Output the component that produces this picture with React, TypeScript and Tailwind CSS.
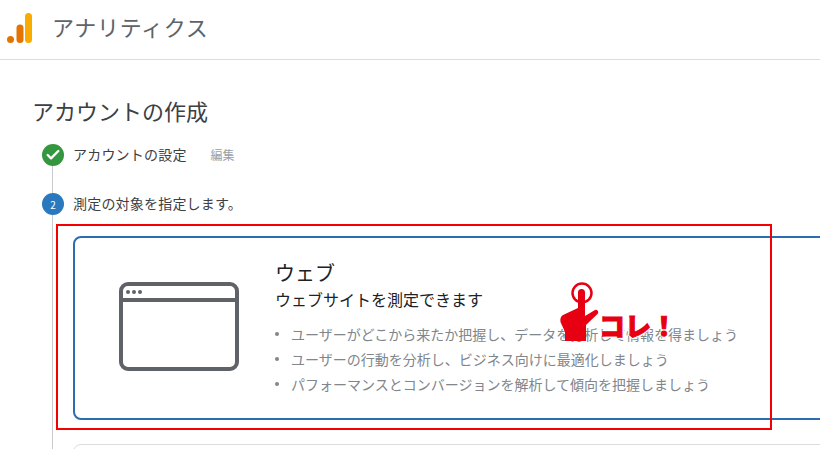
import React from 'react';
import { Check } from 'lucide-react';

const bullets = [
  'ユーザーがどこから来たか把握し、データを分析して情報を得ましょう',
  'ユーザーの行動を分析し、ビジネス向けに最適化しましょう',
  'パフォーマンスとコンバージョンを解析して傾向を把握しましょう',
];

const font = "font-['Noto_Sans_CJK_JP','Noto_Sans',sans-serif]";

const AnalyticsLogo = () => (
  <svg width="28" height="32" viewBox="0 0 28 32" className="block -mt-[2px]">
    <rect x="19" y="0" width="7" height="30" rx="3.5" fill="#f9ab00" />
    <rect x="10.5" y="11.5" width="7" height="18.5" rx="3.5" fill="#e37400" />
    <circle cx="4.5" cy="26.5" r="3.5" fill="#e37400" />
  </svg>
);

const BrowserIcon = () => (
  <svg width="120" height="89" viewBox="0 0 120 89" className="block shrink-0">
    <rect x="2" y="2" width="116" height="85" rx="7" fill="none" stroke="#5f6368" strokeWidth="4" />
    <rect x="1" y="16" width="118" height="4" fill="#5f6368" />
    <circle cx="9" cy="10" r="2" fill="#5f6368" />
    <circle cx="15" cy="10" r="2" fill="#5f6368" />
    <circle cx="21" cy="10" r="2" fill="#5f6368" />
  </svg>
);

const TapHand = () => (
  <svg width="42" height="66" viewBox="0 0 42 66" className="block">
    <circle cx="22" cy="13" r="9.5" fill="none" stroke="#e60012" strokeWidth="2.5" />
    <path
      d="M18 12.5a3.500 3.500 0 0 1 7 0V36l10-6a2.500 2.500 0 0 1 3 3.500L26 45V61H5V52L0.500 42C0 38 1 36 3 35L18 28z"
      fill="#e60012"
    />
  </svg>
);

const App = () => {
  return (
    <div className={`relative w-[820px] h-[449px] overflow-hidden bg-white text-[#3c4043] ${font}`}>
      {/* Header */}
      <div className="flex items-center h-[60px] border-b border-[#dadce0] pl-[6px]">
        <AnalyticsLogo />
        <span className="ml-[18px] text-[22px] tracking-[0.7px] leading-none text-[#5f6368] -mt-[7px]">アナリティクス</span>
      </div>

      {/* Page title */}
      <h1 className="ml-[32px] mt-[36px] text-[22px] leading-[28px] font-normal text-[#3c4043]">アカウントの作成</h1>

      {/* Step 1 */}
      <div className="flex items-center ml-[42px] mt-[20px] h-[22px]">
        <div className="flex items-center justify-center w-[22px] h-[22px] rounded-full bg-[#34973f]">
          <Check className="w-[16px] h-[16px] text-white" strokeWidth={3.5} />
        </div>
        <span className="ml-[9px] text-[14px] tracking-[0.2px] leading-none -mt-[2px]">アカウントの設定</span>
        <span className="ml-[24px] text-[12px] leading-none text-[#9aa0a6]">編集</span>
      </div>
      <div className="ml-[52px] w-px h-[27px] bg-[#c8cacc]" />

      {/* Step 2 */}
      <div className="flex items-center ml-[42px] h-[22px]">
        <div className="flex items-center justify-center w-[22px] h-[22px] rounded-full bg-[#2a78bd] text-[10px] text-white">2</div>
        <span className="ml-[9px] text-[14px] tracking-[0.2px] leading-none -mt-[3px]">測定の対象を指定します。</span>
      </div>

      <div className="ml-[52px] pl-[20px] border-l border-[#c8cacc] h-[300px] pt-[21px]">
        {/* Web card */}
        <div className="flex w-[800px] h-[184px] border-2 border-[#2a6db0] rounded-[8px] pt-[44px] pl-[44px]">
          <BrowserIcon />
          <div className="ml-[36px] -mt-[23px]">
            <h2 className="text-[20px] leading-[28px] font-normal text-[#202124]">ウェブ</h2>
            <p className="text-[16px] leading-[24px] text-[#202124]">ウェブサイトを測定できます</p>
            <ul className="mt-[10px]">
              {bullets.map((text) => (
                <li key={text} className="flex items-center h-[25px] text-[14px] leading-none text-[#80868b]">
                  <span className="w-[4px] h-[4px] rounded-full bg-[#80868b] mr-[12px]" />
                  {text}
                </li>
              ))}
            </ul>
          </div>
        </div>

        {/* Next card, cut off by the window */}
        <div className="w-[800px] h-[60px] mt-[24px] border border-[#dadce0] rounded-[8px]" />
      </div>

      {/* Red annotation box */}
      <div className="absolute left-[56px] top-[224px] w-[716px] h-[206px] border-2 border-[#f50000]" />

      {/* Tap annotation */}
      <div className="absolute left-[560px] top-[280px]">
        <TapHand />
      </div>
      <span className="absolute left-[599px] top-[307px] text-[26px] leading-[36px] font-black text-[#e60012] [-webkit-text-stroke:1px_#e60012] [text-shadow:2px_0_0_#fff,-2px_0_0_#fff,0_2px_0_#fff,0_-2px_0_#fff]">
        コレ！
      </span>
    </div>
  );
};

export default App;
